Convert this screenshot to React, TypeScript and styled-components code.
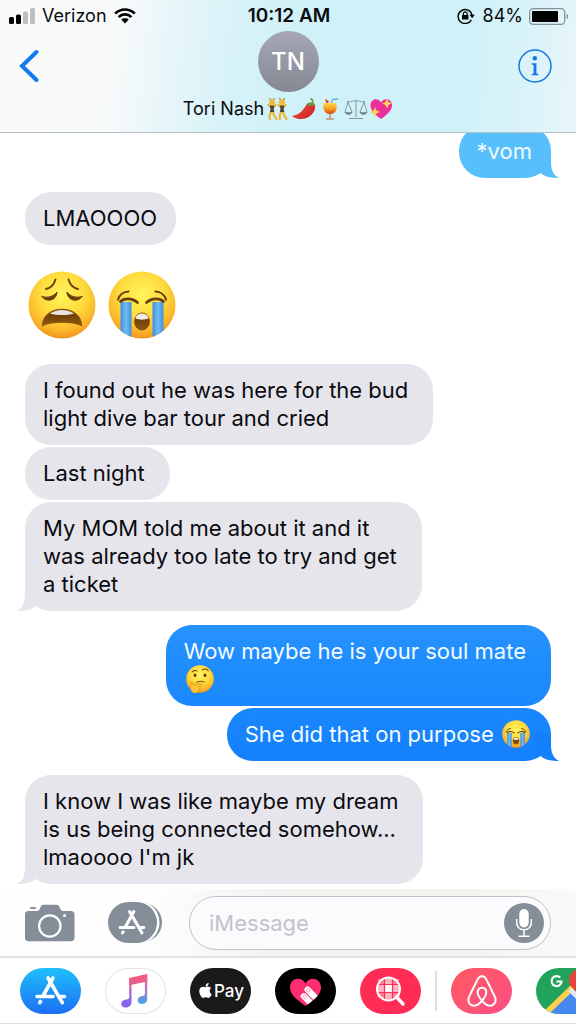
import React from "react";
import styled, { createGlobalStyle, css } from "styled-components";
import { FaAirbnb, FaApple } from "react-icons/fa";

const GlobalStyle = createGlobalStyle`
  * { box-sizing: border-box; }
  body {
    margin: 0;
    background: #fff;
    color: #0b0b10;
    font-family: Inter, Roboto, "Liberation Sans", sans-serif;
  }
  button { border: 0; padding: 0; background: none; font: inherit; color: inherit; cursor: pointer; }
  svg { display: block; }
`;

const Screen = styled.div`
  display: flex;
  flex-direction: column;
  height: 100vh;
  overflow: hidden;
`;

/* ---------- header ---------- */

const Header = styled.header`
  flex: none;
  display: flex;
  flex-direction: column;
  height: 133px;
  border-bottom: 1px solid #b4bfc4;
  background: linear-gradient(97deg, #fafafa 0%, #f8fafa 20%, #e4f5f9 32%, #d5f2f8 42%, #cff1f8 55%, #d0f1f8 80%, #daf3f9 91%, #eaf6fa 100%);
`;

const StatusBar = styled.div`
  display: grid;
  grid-template-columns: 1fr auto 1fr;
  align-items: center;
  height: 32px;
  padding: 0 7px 0 9px;
  font-size: 18px;
  line-height: 22px;
`;

const StatusSide = styled.div<{ $end?: boolean }>`
  display: flex;
  align-items: center;
  gap: ${(p) => (p.$end ? 6 : 7)}px;
  justify-content: ${(p) => (p.$end ? "flex-end" : "flex-start")};
`;

const Clock = styled.time`
  font-size: 19px;
  font-weight: 600;
`;

const NavBar = styled.div`
  flex: 1;
  display: grid;
  grid-template-columns: 60px 1fr 60px;
  margin-top: -1px;
  padding: 0 18px;
`;

const NavButton = styled.button<{ $end?: boolean }>`
  display: flex;
  align-self: start;
  height: 70px;
  align-items: center;
  justify-content: ${(p) => (p.$end ? "flex-end" : "flex-start")};
  padding-right: ${(p) => (p.$end ? 6 : 0)}px;
`;

const Contact = styled.div`
  display: flex;
  flex-direction: column;
  align-items: center;
  gap: 5px;
`;

const Avatar = styled.div`
  display: grid;
  place-items: center;
  width: 61px;
  height: 61px;
  border-radius: 50%;
  background: linear-gradient(#a5a8b4, #868993);
  color: #fff;
  font-size: 24px;
  font-weight: 500;
`;

const ContactName = styled.h1`
  display: flex;
  align-items: center;
  gap: 2px;
  margin: 0;
  font-size: 18px;
  font-weight: 400;
  line-height: 22px;
`;

/* ---------- thread ---------- */

const Thread = styled.main`
  flex: 1;
  min-height: 0;
  overflow: hidden;
  display: flex;
  flex-direction: column;
  justify-content: flex-end;
  gap: 14px;
  padding: 0 25px 5px;
`;

const Group = styled.section<{ $mine?: boolean }>`
  flex: none;
  display: flex;
  flex-direction: column;
  align-items: ${(p) => (p.$mine ? "flex-end" : "flex-start")};
  gap: 2px;
`;

const Bubble = styled.p<{ $tone: "grey" | "sky" | "blue" | "deep"; $snug?: boolean }>`
  position: relative;
  margin: 0;
  padding: 12px ${(p) => (p.$snug ? 19 : 25)}px 13px 18px;
  border-radius: 26px;
  font-size: 22px;
  line-height: 28px;
  white-space: pre-line;
  ${(p) =>
    p.$tone === "grey"
      ? css`background: #e6e5ec;`
      : css`
          color: #f4fbff;
          background: ${
            { sky: "#57bffc", blue: "linear-gradient(#2592fd, #1a87fd)", deep: "linear-gradient(#1a87fd, #1480fd)" }[p.$tone]
          };
        `}
`;

const Tail = styled.svg<{ $mine?: boolean }>`
  position: absolute;
  bottom: 0;
  ${(p) => (p.$mine ? "right: -8px;" : "left: -8px; transform: scaleX(-1);")}
`;

const InlineEmoji = styled.span`
  display: inline-block;
  height: 28px;
  margin: 0 2px;
  vertical-align: top;
`;

const BigEmojis = styled.div`
  display: flex;
  gap: 12px;
  padding: 12px 3px 11px;
`;

/* ---------- composer ---------- */

const Composer = styled.form`
  flex: none;
  display: flex;
  align-items: center;
  height: 69px;
  padding: 0 25px;
  border-bottom: 2px solid #e2e2e4;
  background: linear-gradient(90deg, #fefefe 25%, #f5f4f2 45%, #f5f3ef 80%, #fbfaf9 100%);
`;

const ToolButton = styled.button<{ $after: number }>`
  flex: none;
  margin-right: ${(p) => p.$after}px;
`;

const Field = styled.div`
  flex: 1;
  min-width: 0;
  display: flex;
  align-items: center;
  height: 54px;
  padding: 0 6px 0 19px;
  border: 1px solid #c2c0cc;
  border-radius: 27px;
  background: #fbfbfd;
`;

const MessageInput = styled.input`
  flex: 1;
  min-width: 0;
  padding: 0;
  border: 0;
  outline: 0;
  background: none;
  font: inherit;
  font-size: 22px;
  line-height: 28px;
  &::placeholder { color: #c3c3ca; opacity: 1; }
`;

const AppStrip = styled.nav`
  flex: none;
  display: flex;
  align-items: center;
  height: 66px;
  padding-left: 20px;
  overflow: hidden;
  border-bottom: 1px solid #dcdcde;
  background: #fff;
`;

const AppSet = styled.div`
  flex: none;
  display: flex;
  gap: 24px;
`;

const Divider = styled.span`
  flex: none;
  width: 2px;
  height: 40px;
  margin: 0 14px;
  background: #dfdfe3;
`;

const AppPill = styled.button<{ $fill: string; $outlined?: boolean }>`
  flex: none;
  display: flex;
  align-items: center;
  justify-content: center;
  width: 61px;
  height: 46px;
  overflow: hidden;
  border-radius: 23px;
  color: #fff;
  background: ${(p) => p.$fill};
  ${(p) => p.$outlined && "box-shadow: inset 0 0 0 1px #e4e4e6;"}
`;

const PayLabel = styled.span`
  font-size: 17px;
  font-weight: 500;
  line-height: 22px;
`;

/* ---------- emoji drawings ---------- */

type FaceKind = "weary" | "sob" | "think";

function Face({ kind, size, label }: { kind: FaceKind; size: number; label: string }) {
  const id = `face-${kind}-${size}`;
  return (
    <svg width={size} height={size} viewBox="0 0 68 68" role="img" aria-label={label}>
      <defs>
        <radialGradient id={id} cx="50%" cy="34%" r="66%">
          <stop offset="0" stopColor="#fff45c" />
          <stop offset=".5" stopColor="#ffdc3e" />
          <stop offset=".82" stopColor="#fbb62b" />
          <stop offset="1" stopColor="#f2951c" />
        </radialGradient>
        <linearGradient id={`${id}-m`} x1="0" y1="0" x2="0" y2="1">
          <stop offset="0" stopColor="#5b3205" />
          <stop offset="1" stopColor="#93590f" />
        </linearGradient>
        <linearGradient id={`${id}-t`} x1="0" y1="0" x2="1" y2="0">
          <stop offset="0" stopColor="#3c8fdd" />
          <stop offset=".5" stopColor="#6fbcf5" />
          <stop offset="1" stopColor="#3c8fdd" />
        </linearGradient>
        <clipPath id={`${id}-c`}><circle cx="34" cy="34" r="33.5" /></clipPath>
      </defs>
      <circle cx="34" cy="34" r="33.5" fill={`url(#${id})`} />
      {kind === "weary" && (
        <g fill="none" stroke="#6b3f0a" strokeLinecap="round">
          <path d="M18 18C22.500 17 26 13.500 27.500 8.500" strokeWidth="1.900" />
          <path d="M50 18C45.500 17 42 13.500 40.500 8.500" strokeWidth="1.900" />
          <path d="M14 25.500C19 27.500 26 25.500 29 21C28.500 30.500 17.500 31.500 14 25.500Z" fill="#6b3f0a" strokeWidth="1" />
          <path d="M54 25.500C49 27.500 42 25.500 39 21C39.500 30.500 50.500 31.500 54 25.500Z" fill="#6b3f0a" strokeWidth="1" />
          <path d="M14.500 54.500C15 33 53 33 53.500 54.500C44 50 24 50 14.500 54.500Z" fill={`url(#${id}-m)`} stroke="#8a5410" strokeWidth="1.200" />
          <path d="M22 42.500C29 37.800 39 37.800 46 42.500C39 44.500 29 44.500 22 42.500Z" fill="#e9e4dc" stroke="none" />
        </g>
      )}
      {kind === "sob" && (
        <g>
          <g clipPath={`url(#${id}-c)`}>
            <rect x="12.500" y="31" width="11" height="38" fill={`url(#${id}-t)`} />
            <rect x="44.500" y="31" width="11" height="38" fill={`url(#${id}-t)`} />
          </g>
          <g fill="none" stroke="#6b3f0a" strokeLinecap="round">
            <path d="M10 28.500C11.500 24 15.500 20.500 20.500 20.500" strokeWidth="2.200" />
            <path d="M58 28.500C56.500 24 52.500 20.500 47.500 20.500" strokeWidth="2.200" />
            <path d="M12.500 30.500C16 27 24 26.500 29.500 31.500" strokeWidth="2.800" />
            <path d="M55.500 30.500C52 27 44 26.500 38.500 31.500" strokeWidth="2.800" />
          </g>
          <ellipse cx="34" cy="50.500" rx="7.400" ry="8.500" fill={`url(#${id}-m)`} stroke="#7a4a0c" />
          <path d="M27.500 47.500C28.500 40.800 39.500 40.800 40.500 47.500C37 49 31 49 27.500 47.500Z" fill="#f1ece4" />
        </g>
      )}
      {kind === "think" && (
        <g fill="none" strokeLinecap="round">
          <path d="M15 17C18 13 23 12 27 15M40 12C44 8 52 9 54 14" stroke="#6b3f0a" strokeWidth="2.600" />
          <ellipse cx="22" cy="25" rx="3.300" ry="4.200" fill="#5b3205" />
          <ellipse cx="46" cy="25" rx="3.300" ry="4.200" fill="#5b3205" />
          <path d="M26 42C32 39 38 39 44 41" stroke="#6b3f0a" strokeWidth="2.400" />
          <path d="M12 43C15 38 19 41 18 48L34 45C40 45 40 50 36 51L32 52C36 58 32 66 24 68C14 69 8 60 12 43Z" fill="#fcc436" stroke="#e0961f" strokeWidth="2" />
        </g>
      )}
    </svg>
  );
}

const Dancer = ({ x }: { x: number }) => (
  <g transform={`translate(${x} 0)`}>
    <path d="M2.500 1L4 4M7.500 1L6 4" stroke="#8a6a1e" strokeWidth="1" />
    <path d="M1.500 8L4 10M8.500 8L6.500 10M4 15L2.500 19L3 22M6 15L7 18L9.500 22" fill="none" stroke="#eab62e" strokeWidth="2.200" strokeLinecap="round" />
    <circle cx="5" cy="5.200" r="3" fill="#f1bc31" />
    <path d="M2.600 8.500L7.400 8.500L6.600 12L7.400 15L2.800 15L3.600 12Z" fill="#4a4335" />
  </g>
);

const NameEmojis = () => (
  <svg width="127" height="24" viewBox="0 0 127 24" role="img" aria-label="dancers, hot pepper, tropical drink, balance scale, sparkling heart">
    <defs>
      <linearGradient id="drink" x1="0" y1="0" x2="0" y2="1">
        <stop offset="0" stopColor="#ffd84a" /><stop offset=".55" stopColor="#f79a1c" /><stop offset="1" stopColor="#dc3a18" />
      </linearGradient>
      <linearGradient id="chili" x1="0" y1="0" x2="1" y2="1">
        <stop offset="0" stopColor="#f4564a" /><stop offset="1" stopColor="#c61a1c" />
      </linearGradient>
    </defs>
    <Dancer x={1} />
    <Dancer x={11} />
    <path d="M26 19C35 18 38 11 41 7C44 4 50 6 49 11C48 20 35 26 26 19Z" fill="url(#chili)" />
    <path d="M41 8C43 4 49 5 49.500 9L46 8L44 9Z" fill="#57a53b" />
    <path d="M47 6C47 3 46 2 44.500 1.500" fill="none" stroke="#57a53b" strokeWidth="1.600" />
    <path d="M64 8L67 2.500L72 2" fill="none" stroke="#6aaee0" strokeWidth="1.500" />
    <path d="M59 2L63 4L61 8Z" fill="#e0442e" />
    <path d="M58 6H70C72 11 70 17 64 17C58 17 56 11 58 6Z" fill="url(#drink)" />
    <path d="M64 17V21M60 22H68" stroke="#b7947a" strokeWidth="1.600" />
    <path d="M90 3V20M83 21.500H97M81 4C85 6 87 3 90 4C93 3 95 6 99 4M82 5L79 15M82 5L86 15M98 5L94 15M98 5L101 15" fill="none" stroke="#8897a0" strokeWidth="1" />
    <path d="M78.500 15H86.500C85.500 19 79.500 19 78.500 15ZM93.500 15H101.500C100.500 19 94.500 19 93.500 15Z" fill="#7e8d97" />
    <path d="M115 22C109 18 104 13 104.500 7.500C105 2 112 0 115 5.500C118 0 125.500 2 126 7.500C126.500 13 121 18 115 22Z" fill="#ec2f9b" />
    <path d="M121 1.500L122.500 5L126 6.500L122.500 8L121 11.500L119.500 8L116 6.500L119.500 5ZM109 10L110.500 13.500L114 15L110.500 16.500L109 20L107.500 16.500L104 15L107.500 13.500Z" fill="#fcd34c" />
  </svg>
);

/* ---------- icons ---------- */

const BubbleTail = ({ mine, color }: { mine?: boolean; color: string }) => (
  <Tail $mine={mine} width="28" height="27" viewBox="0 0 28 27" aria-hidden="true">
    <path d="M4 0H20V11C20 18 22 24 28 27C21 27 14 26 10 22.200L4 16Z" fill={color} />
  </Tail>
);

const SignalIcon = () => (
  <svg width="26" height="16" viewBox="0 0 26 16" aria-hidden="true">
    <rect x="0" y="9" width="5" height="7" rx="1.500" fill="#000" />
    <rect x="7" y="6.500" width="5" height="9.500" rx="1.500" fill="#000" />
    <rect x="14" y="3.500" width="5" height="12.500" rx="1.500" fill="#bcbec0" />
    <rect x="21" y="0" width="5" height="16" rx="1.500" fill="#bcbec0" />
  </svg>
);

const WifiIcon = () => (
  <svg width="22" height="16" viewBox="0 0 22 16" aria-hidden="true">
    <path d="M1.200 5.600C6.700 .1 15.300 .1 20.800 5.600M4.600 9.100C8.200 5.500 13.800 5.500 17.400 9.100" fill="none" stroke="#000" strokeWidth="2.700" />
    <path d="M11 15.500L7.200 11.600C9.200 9.700 12.800 9.700 14.800 11.600Z" fill="#000" />
  </svg>
);

const RotationLockIcon = () => (
  <svg width="20" height="16" viewBox="0 0 20 16" aria-hidden="true">
    <path d="M14.300 11.800A7 7 0 1 1 15 7.200" fill="none" stroke="#000" strokeWidth="1.400" />
    <path d="M12.400 6.800H17.800L15.200 10.200Z" fill="#000" />
    <rect x="5" y="7" width="6.400" height="4.600" rx=".6" fill="#000" />
    <path d="M6.300 7.200V5.800A1.900 1.900 0 0 1 10.100 5.800V7.200" fill="none" stroke="#000" strokeWidth="1.200" />
  </svg>
);

const BatteryIcon = () => (
  <svg width="40" height="17" viewBox="0 0 40 17" aria-hidden="true">
    <rect x=".7" y=".7" width="35" height="15.600" rx="3.500" fill="none" stroke="#83959b" strokeWidth="1.300" />
    <rect x="3" y="3" width="26" height="11" rx="1" fill="#000" />
    <path d="M37.500 5.800C39.600 6.600 39.600 10.400 37.500 11.200Z" fill="#83959b" />
  </svg>
);

const BackIcon = () => (
  <svg width="22" height="34" viewBox="0 0 22 34" aria-hidden="true">
    <path d="M18.500 3L4 17L18.500 31" fill="none" stroke="#0f7bf0" strokeWidth="4" strokeLinecap="round" strokeLinejoin="miter" />
  </svg>
);

const InfoIcon = () => (
  <svg width="34" height="34" viewBox="0 0 34 34" aria-hidden="true">
    <circle cx="17" cy="17" r="16" fill="none" stroke="#1377e4" strokeWidth="1.500" />
    <circle cx="16.800" cy="9.300" r="2.200" fill="#1377e4" />
    <path d="M13.700 14.300H18.400V24.600L20.400 25.100V26.300H13.600V25.100L15.600 24.600V15.900L13.700 15.500Z" fill="#1377e4" />
  </svg>
);

const CameraIcon = () => (
  <svg width="50" height="38" viewBox="0 0 50 38" aria-hidden="true">
    <rect x="5" y="3" width="6" height="2" rx="1" fill="#858d99" />
    <path d="M3.500 7H12C14 7 14.500 5.500 15.300 3.500C16 1.500 17 .8 19 .8H31C33 .8 34 1.500 34.700 3.500C35.500 5.500 36 7 38 7H46C48.200 7 49.500 8.300 49.500 10.500V33.500C49.500 36 48.200 37.200 46 37.200H3.500C1.200 37.200 0 36 0 33.500V10.500C0 8.300 1.200 7 3.500 7Z" fill="#858d99" />
    <circle cx="24.800" cy="22" r="10.700" fill="none" stroke="#fff" strokeWidth="2.200" />
    <circle cx="39.500" cy="11.500" r="1.500" fill="#fff" />
  </svg>
);

const StoreStrokes = () => (
  <g stroke="#fff" strokeWidth="3.600" strokeLinecap="round" fill="none">
    <path d="M33 10L23.500 27M20.500 33.500L19.800 34.700M28 10L42.300 34.700M17 28.500H33M40 28.500H44.500" />
  </g>
);

const AppsIcon = () => (
  <svg width="54" height="41" viewBox="0 0 54 41" aria-hidden="true">
    <rect x="6" y="1" width="48" height="39" rx="19.500" fill="#858d99" />
    <rect x="1" y="-1" width="50.500" height="43" rx="21.500" fill="#fff" />
    <rect x="0" y="0" width="49" height="41" rx="20.500" fill="#858d99" />
    <g transform="translate(-2.500 1) scale(.86)"><StoreStrokes /></g>
  </svg>
);

const MicIcon = () => (
  <svg width="40" height="40" viewBox="0 0 40 40" aria-hidden="true">
    <circle cx="20" cy="20" r="20" fill="#858d99" />
    <rect x="15.300" y="6" width="9.400" height="18.500" rx="4.700" fill="#fff" />
    <path d="M12.700 16V19.500C12.700 29.300 27.300 29.300 27.300 19.500V16M20 27V33M14.500 33.300H25.500" fill="none" stroke="#fff" strokeWidth="1.500" />
  </svg>
);

const StoreIcon = () => (
  <svg width="61" height="46" viewBox="0 0 61 46" aria-hidden="true"><StoreStrokes /></svg>
);

const MusicIcon = () => (
  <svg width="61" height="46" viewBox="0 0 61 46" aria-hidden="true">
    <defs>
      <linearGradient id="note" gradientUnits="userSpaceOnUse" x1="30" y1="6" x2="30" y2="40">
        <stop offset="0" stopColor="#fb5b77" /><stop offset=".3" stopColor="#e0608f" /><stop offset=".65" stopColor="#9a6be4" /><stop offset="1" stopColor="#7b63f5" />
      </linearGradient>
      <linearGradient id="stem" gradientUnits="userSpaceOnUse" x1="40" y1="6" x2="40" y2="36">
        <stop offset="0" stopColor="#fb5b77" /><stop offset=".4" stopColor="#c76eb0" /><stop offset="1" stopColor="#45a5f2" />
      </linearGradient>
    </defs>
    <path d="M24.200 10L42.200 6V13.500L24.200 17.300Z" fill="url(#note)" />
    <path d="M24.200 10H26.500V34.500C26.500 38 23.500 39.500 20.500 39.500C14.500 39.500 15 32 21 31.500C23.500 31.300 24.200 31 24.200 28.500Z" fill="url(#note)" />
    <path d="M39.900 8L42.200 6V31C42.200 34.500 39.500 36 37 36C31 36 31.500 28.500 37 28C39.500 27.700 39.900 27.500 39.900 25Z" fill="url(#stem)" />
  </svg>
);

const HeartHandIcon = () => (
  <svg width="61" height="46" viewBox="0 0 61 46" aria-hidden="true">
    <defs>
      <clipPath id="heart"><path d="M30.500 38C22 32 15 26.500 15 19.500C15 9.500 27 8 30.500 15.500C34 8 46 9.500 46 19.500C46 26.500 39 32 30.500 38Z" /></clipPath>
    </defs>
    <g clipPath="url(#heart)">
      <rect width="61" height="46" fill="#ff2d6f" />
      <g transform="rotate(-45 30 27)">
        <rect x="25.300" y="24" width="6.200" height="24" rx="3" fill="#fff" />
        <rect x="32.500" y="22" width="6.200" height="24" rx="3" fill="#fff" />
        <path d="M27 26.500h2.800v3h-2.800zM34.200 24.500h2.800v3h-2.800z" fill="none" stroke="#ff7ba3" strokeWidth=".8" />
      </g>
    </g>
  </svg>
);

const SearchIcon = () => (
  <svg width="61" height="46" viewBox="0 0 61 46" aria-hidden="true">
    <circle cx="28.500" cy="21" r="11.500" fill="#ffb3c1" />
    <path d="M17.500 24.500h7v5h-7zM32.500 24.500h7v5h-7zM18 11h6.500v5H18zM32.500 11H39v5h-6.500z" fill="#ff7f99" />
    <path d="M25 17h7v7h-7z" fill="#fff" />
    <path d="M24.500 10V32M32.500 10V32M17 16.500H40M17 24.500H40" stroke="#ff2d55" strokeWidth="1.200" />
    <circle cx="28.500" cy="21" r="11.500" fill="none" stroke="#fff" strokeWidth="2" />
    <path d="M36.500 29L43 36" stroke="#fff" strokeWidth="3.400" strokeLinecap="round" />
  </svg>
);

const MapsIcon = () => (
  <svg width="61" height="46" viewBox="0 0 61 46" aria-hidden="true">
    <path d="M10 46L36 20L61 46Z" fill="#4688f1" />
    <path d="M7 44L35 17L40 20L13 46H7Z" fill="#fbd14b" />
    <path d="M32 23L36 20L61 43V46H56Z" fill="#e6e8ee" />
    <path d="M33 13C33 5 39 1 44 1C51 1 55 6 55 12C55 20 46 22 44 30C42 22 33 20 33 13Z" fill="#e5443a" />
    <path d="M24.200 9.600A5 5 0 1 0 25.600 13.500H20.500" fill="none" stroke="#fff" strokeWidth="2.100" />
  </svg>
);

/* ---------- page ---------- */

export default function App() {
  return (
    <Screen>
      <GlobalStyle />
      <Header>
        <StatusBar>
          <StatusSide>
            <SignalIcon />
            <span>Verizon</span>
            <WifiIcon />
          </StatusSide>
          <Clock>10:12 AM</Clock>
          <StatusSide $end>
            <RotationLockIcon />
            <span>84%</span>
            <BatteryIcon />
          </StatusSide>
        </StatusBar>
        <NavBar>
          <NavButton type="button" aria-label="Back"><BackIcon /></NavButton>
          <Contact>
            <Avatar>TN</Avatar>
            <ContactName>Tori Nash<NameEmojis /></ContactName>
          </Contact>
          <NavButton type="button" aria-label="Details" $end><InfoIcon /></NavButton>
        </NavBar>
      </Header>

      <Thread>
        <Group $mine>
          <Bubble $tone="sky" $snug>*vom<BubbleTail mine color="#57bffc" /></Bubble>
        </Group>
        <Group>
          <Bubble $tone="grey" $snug>LMAOOOO</Bubble>
        </Group>
        <Group>
          <BigEmojis>
            <Face kind="weary" size={68} label="weary face" />
            <Face kind="sob" size={68} label="loudly crying face" />
          </BigEmojis>
        </Group>
        <Group>
          <Bubble $tone="grey">{"I found out he was here for the bud\nlight dive bar tour and cried"}</Bubble>
          <Bubble $tone="grey">Last night</Bubble>
          <Bubble $tone="grey">
            {"My MOM told me about it and it\nwas already too late to try and get\na ticket"}
            <BubbleTail color="#e6e5ec" />
          </Bubble>
        </Group>
        <Group $mine>
          <Bubble $tone="blue">
            {"Wow maybe he is your soul mate\n"}
            <InlineEmoji><Face kind="think" size={28} label="thinking face" /></InlineEmoji>
          </Bubble>
          <Bubble $tone="deep" $snug>
            {"She did that on purpose "}
            <InlineEmoji><Face kind="sob" size={28} label="loudly crying face" /></InlineEmoji>
            <BubbleTail mine color="#1480fd" />
          </Bubble>
        </Group>
        <Group>
          <Bubble $tone="grey">
            {"I know I was like maybe my dream\nis us being connected somehow...\nlmaoooo I'm jk"}
            <BubbleTail color="#e6e5ec" />
          </Bubble>
        </Group>
      </Thread>

      <Composer onSubmit={(e: React.FormEvent) => e.preventDefault()}>
        <ToolButton type="button" aria-label="Camera" $after={33}><CameraIcon /></ToolButton>
        <ToolButton type="button" aria-label="Apps" $after={27}><AppsIcon /></ToolButton>
        <Field>
          <MessageInput type="text" placeholder="iMessage" aria-label="iMessage" />
          <button type="button" aria-label="Record audio"><MicIcon /></button>
        </Field>
      </Composer>

      <AppStrip aria-label="iMessage apps">
        <AppSet>
          <AppPill type="button" aria-label="App Store" $fill="linear-gradient(#1fc0fb, #1d6ef2)"><StoreIcon /></AppPill>
          <AppPill type="button" aria-label="Music" $fill="#fff" $outlined><MusicIcon /></AppPill>
          <AppPill type="button" $fill="#1b1a19"><FaApple size={17} aria-hidden="true" /><PayLabel>Pay</PayLabel></AppPill>
          <AppPill type="button" aria-label="Digital Touch" $fill="#000"><HeartHandIcon /></AppPill>
          <AppPill type="button" aria-label="Images" $fill="#ff2d55"><SearchIcon /></AppPill>
        </AppSet>
        <Divider />
        <AppSet>
          <AppPill type="button" aria-label="Airbnb" $fill="linear-gradient(135deg, #ff5a5f, #fb4f86)"><FaAirbnb size={36} aria-hidden="true" /></AppPill>
          <AppPill type="button" aria-label="Google Maps" $fill="#22a35c"><MapsIcon /></AppPill>
        </AppSet>
      </AppStrip>
    </Screen>
  );
}
